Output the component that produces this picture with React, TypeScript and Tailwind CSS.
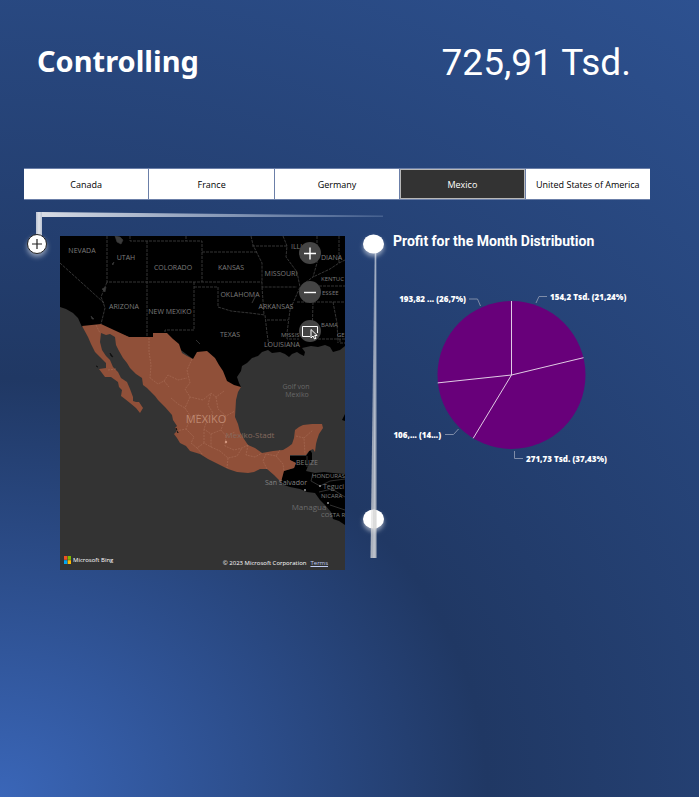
import { useState } from "react";

const COUNTRIES = ["Canada", "France", "Germany", "Mexico", "United States of America"];

const MEXICO =
  "M82 326L101 324L129 337H153V333H167L173 339L179 344L182 353L187 356L193 359L197 352L207 351L215 358L219 365L223 371L227 381L234 385L241 387L238 392L236 400L235 417L238 424L240 432L244 439L248 445L255 448L262 453L273 451L283 450L288 447L292 444L294 438L295 430L299 427L303 425L312 424L322 424L323 428L319 434L317 440L316 444L315 452L313 449L309 451L306 455H290V460L296 463L294 468L284 471L281 482L274 475L267 469H260L254 472L248 473L237 472L228 469L220 465L208 459L200 454L190 451L186 446L180 443L177 438L174 434L177 431L175 428L177 426L173 420L172 415L165 407L158 400L155 396L150 391L147 388L143 385L142 378L136 374L130 368L127 363L123 358L119 351L116 345L115 337L110 334L106 335L101 333L100 342L102 350L106 356L110 360L113 367L118 372L121 378L127 382L130 389L133 397V401L136 402L139 402L143 408L140 413L136 408L130 403L125 399L121 396L122 390L119 387L118 382L111 377L105 377L99 369L106 368V363L100 357L95 352L91 344L88 337Z";

const NORTH_AMERICA =
  "M60 236H345V346L340 350L333 352L330 347L325 345L318 347L311 346L302 348L305 352L304 356L300 354L297 352L292 354L289 357L285 354L280 352L272 353L268 350L262 352L258 356L252 358L247 363L242 366L241 371L237 377L239 383L241 387L234 390L225 381L193 359L167 340L129 337L101 326L82 327L78 318L73 313L66 309L60 307Z";

const CENTRAL_AMERICA =
  "M290 456H306L310 450L312 453V460L308 466L306 471L315 473L324 472L333 473L345 474V525L339 521L333 519L331 512L325 505L320 500L315 493L307 492L300 489L290 487L281 484L283 471L294 468L296 463L290 460Z";

const BORDERS =
  "M107 236V282H262M147 241V337M130 236V241H202V282M202 252H257M194 282V330H165V333M194 287H218V307L231 311L240 312L250 313L265 315L267 333L269 347M60 263L103 302L105 308L101 324M107 282L101 297L104 304M251 236L253 245L257 253L262 263V287H297M252 246H287M283 236L287 246L286 257L297 272L300 287L290 310L287 333V339H299M262 287L264 315M267 320H288M313 302L312 340M297 302H345M303 286H345M317 236V263L313 277L305 283M339 236V263L330 269L313 277M339 263L345 260M333 302L337 323L338 343M310 339H345M340 339V343H345M186 236V241";

const MEXICO_STATES =
  "M149 338V352L151 365L150 378L158 384L164 381L169 387M192 359L187 370L190 383L185 389L190 397L203 400L211 393L216 397L224 391M164 381L168 375L178 380L187 378M96 325L100 333M108 370L116 369M190 397L185 408L191 417L198 414L207 420L213 413L208 405L211 393M216 397L218 409L226 416L235 411M207 420L204 429L211 434L221 430L226 416M191 417L186 429L176 431M186 429L194 437L191 443L197 448L204 443L211 447L211 434M204 443L204 429M221 430L226 436L235 432M226 436L225 446L234 450L242 448L248 445M211 447L220 451L228 458L237 456L242 448M197 448L203 455M228 458L227 468M248 445L246 455L255 457L262 453M267 469L263 461L266 454L276 456L280 450M276 456L283 464L284 471M296 436L304 438L305 454M304 438L313 430M171 398L178 404L185 408";

const LAKES =
  "M115 236L120 237L123 240L121 244L117 242ZM112 264L114 262L113 265ZM91 316L94 319L92 319ZM102 289L106 287L105 292ZM252 303L255 297L253 301ZM196 340L200 344Z";

type Place = { x: number; y: number; text: string; size?: string; tone?: string; anchor?: "start" | "middle" };

const PLACES: Place[] = [
  { x: 82, y: 253, text: "NEVADA" },
  { x: 126, y: 260, text: "UTAH" },
  { x: 173, y: 270, text: "COLORADO" },
  { x: 231, y: 270, text: "KANSAS" },
  { x: 281, y: 276, text: "MISSOURI" },
  { x: 291, y: 249, text: "ILLI", anchor: "start" },
  { x: 321, y: 260, text: "DIANA", anchor: "start" },
  { x: 321, y: 281, text: "KENTUC", size: "text-[6px]", anchor: "start" },
  { x: 322, y: 295, text: "ESSEE", size: "text-[6px]", anchor: "start" },
  { x: 240, y: 297, text: "OKLAHOMA" },
  { x: 276, y: 309, text: "ARKANSAS" },
  { x: 124, y: 309, text: "ARIZONA" },
  { x: 170, y: 314, text: "NEW MEXIKO" },
  { x: 230, y: 337, text: "TEXAS" },
  { x: 281, y: 337, text: "MISSIS", size: "text-[6px]", anchor: "start" },
  { x: 321, y: 327, text: "BAMA", size: "text-[6px]", anchor: "start" },
  { x: 337, y: 337, text: "GE", size: "text-[6px]", anchor: "start" },
  { x: 282, y: 347, text: "LOUISIANA" },
  { x: 307, y: 465, text: "BELIZE" },
  { x: 312, y: 478, text: "HONDURAS", size: "text-[6px]", anchor: "start" },
  { x: 321, y: 498, text: "NICARA", size: "text-[6px]", anchor: "start" },
  { x: 321, y: 517, text: "COSTA R", size: "text-[6px]", anchor: "start" },
  { x: 296, y: 389, text: "Golf von", tone: "fill-[#686868]" },
  { x: 297, y: 397, text: "Mexiko", tone: "fill-[#686868]" },
  { x: 286, y: 485, text: "San Salvador", tone: "fill-[#838383]" },
  { x: 309, y: 510, text: "Managua", size: "text-[8px]", tone: "fill-[#6c6c6c]" },
  { x: 323, y: 489, text: "Teguci", tone: "fill-[#777777]", anchor: "start" },
  { x: 250, y: 438, text: "Mexiko-Stadt", size: "text-[8px]", tone: "fill-[#85695e]" },
  { x: 206, y: 423, text: "MEXIKO", size: "text-[11px]", tone: "fill-[#be8871]" },
];

function MapPanel() {
  return (
    <section aria-label="Map" className="relative h-[334px] overflow-hidden bg-[#333333]">
      <svg viewBox="60 236 285 334" preserveAspectRatio="xMidYMid slice" className="h-full w-full">
        <path d={NORTH_AMERICA} fill="#000" />
        <path d={CENTRAL_AMERICA} fill="#000" />
        <path d="M345 414L342 420L345 421Z" fill="#000" />
        <path d={BORDERS} fill="none" stroke="#434343" strokeWidth="0.8" strokeDasharray="3 1" />
        <path d={LAKES} fill="#3b3b3b" stroke="#3b3b3b" strokeWidth="0.6" />
        <path d={MEXICO} fill="#905039" />
        <path d="M110 353L113 357L111 356ZM96 366L98 367ZM176 428L178 433Z" stroke="#111" strokeWidth="0.8" />
        <path d={MEXICO_STATES} fill="none" stroke="#a66a53" strokeWidth="0.7" strokeDasharray="2 1" />
        <path d="M313 473L311 481L320 486L330 481L345 479M307 456V467M319 492L332 489L345 497M330 505L345 510" fill="none" stroke="#3b3b3b" strokeWidth="0.8" />
        <g fill="#999">
          <circle cx="305" cy="490" r="1" />
          <circle cx="320" cy="486" r="1" />
          <circle cx="328" cy="503" r="1" />
          <circle cx="226" cy="442" r="1.2" fill="#d3977f" />
        </g>
        {PLACES.map((p) => (
          <text
            key={p.text}
            x={p.x}
            y={p.y}
            textAnchor={p.anchor ?? "middle"}
            className={`${p.size ?? "text-[7px]"} ${p.tone ?? "fill-[#7c7c7c]"}`}
          >
            {p.text}
          </text>
        ))}
      </svg>

      <div className="absolute top-[6px] right-6 flex flex-col gap-[17px]">
        <button aria-label="Zoom in" className="size-[22px] rounded-full bg-[#444444]">
          <svg viewBox="0 0 22 22" fill="none" stroke="#fff" strokeWidth="1.4">
            <path d="M5 11.5H17M11 5.5V17.5" />
          </svg>
        </button>
        <button aria-label="Zoom out" className="size-[22px] rounded-full bg-[#444444]">
          <svg viewBox="0 0 22 22" fill="none" stroke="#fff" strokeWidth="1.4">
            <path d="M5 11.5H17" />
          </svg>
        </button>
        <button aria-label="Select area" className="size-[22px] rounded-full bg-[#444444]">
          <svg viewBox="0 0 22 22" fill="none" stroke="#fff" strokeWidth="1">
            <path d="M11 16.5H3.500V6.500H18.500V13" />
            <path d="M12 9.500V18L14 16L15.500 19L17 18.300L15.700 15.500H18.200Z" fill="#444" />
          </svg>
        </button>
      </div>

      <footer className="absolute inset-x-0 bottom-0 flex h-[20px] items-center pr-[17px] pl-1 text-[6px] text-white">
        <svg viewBox="0 0 7 8" className="mr-[2px] h-2 w-[7px]">
          <path d="M0 0H3.300V3.800H0Z" fill="#f25022" />
          <path d="M3.700 0H7V3.800H3.700Z" fill="#7fba00" />
          <path d="M0 4.200H3.300V8H0Z" fill="#00a4ef" />
          <path d="M3.700 4.200H7V8H3.700Z" fill="#ffb900" />
        </svg>
        <span>Microsoft Bing</span>
        <span className="mt-[6px] ml-auto">© 2023 Microsoft Corporation</span>
        <a href="#terms" className="mt-[6px] ml-1 text-[#bfcdf5] underline">
          Terms
        </a>
      </footer>
    </section>
  );
}

function PieChart() {
  return (
    <section aria-labelledby="pie-title" className="-mt-[3px] min-w-0">
      <h2 id="pie-title" className="font-[Roboto,sans-serif] text-[14px] leading-4 font-bold whitespace-nowrap">
        Profit for the Month Distribution
      </h2>
      <svg viewBox="393 249 257 240" className="w-full overflow-visible">
        <circle cx="511.500" cy="375" r="74" fill="#68007a" />
        <path
          d="M511.500 375V301M511.500 375L583.500 357.700M511.500 375L473.200 438.300M511.500 375L437.700 382.900"
          stroke="#e0cbe4"
          strokeWidth="1"
        />
        <path
          d="M536 303L539 296.500H547M480.500 306L477.500 299H469M458.500 429L453.500 434.500H445M514.500 451V458.500H523"
          fill="none"
          stroke="#7f8ca8"
          strokeWidth="1"
        />
        <g className="fill-white text-[8px] font-extrabold">
          <text x="550" y="300">154,2 Tsd. (21,24%)</text>
          <text x="466" y="302" textAnchor="end">193,82 ... (26,7%)</text>
          <text x="441" y="438" textAnchor="end">106,... (14...)</text>
          <text x="526" y="462">271,73 Tsd. (37,43%)</text>
        </g>
      </svg>
    </section>
  );
}

function Timeline() {
  return (
    <svg viewBox="349 230 48 334" className="h-[334px] w-12 overflow-visible" aria-hidden="true">
      <defs>
        <linearGradient id="rail" x1="0" y1="0" x2="0" y2="1">
          <stop offset="0" stopColor="#fff" stopOpacity="0.35" />
          <stop offset="1" stopColor="#dcdcdc" stopOpacity="0.75" />
        </linearGradient>
        <filter id="glow" x="-50%" y="-50%" width="200%" height="200%">
          <feDropShadow dx="0" dy="3" stdDeviation="2" floodColor="#fff" floodOpacity="0.5" />
        </filter>
      </defs>
      <g fill="#fff" filter="url(#glow)">
        <ellipse cx="377.500" cy="238" rx="10.500" ry="9.500" />
        <ellipse cx="377.500" cy="513" rx="10.500" ry="9.500" />
      </g>
      <path d="M378.500 247H380.500L380.500 552H374.500Z" fill="url(#rail)" />
      <path d="M379.500 247L378 552" stroke="#fff" strokeOpacity="0.35" />
      <path d="M377 504H380.500V523H377Z" fill="#d0d0d0" fillOpacity="0.6" />
    </svg>
  );
}

export default function App() {
  const [selected, setSelected] = useState("Mexico");
  return (
    <main className="min-h-screen bg-[radial-gradient(ellipse_166%_125%_at_0%_100%,#3a66b8_0%,#203864_42%,#2d5190_100%)] font-['Open_Sans','Noto_Sans',sans-serif] text-white">
      <header className="flex h-[168px] items-start justify-between pt-[38px] pr-[68px] pl-[37px]">
        <h1 className="font-['Noto_Sans',sans-serif] text-[29px] leading-[46px] font-bold">Controlling</h1>
        <p className="font-[Roboto,sans-serif] text-[37px] leading-[50px]">725,91 Tsd.</p>
      </header>

      <nav aria-label="Country" className="mr-[49px] ml-6 grid h-8 grid-cols-5 gap-px border-y border-[#6b7fa8] bg-[#6b7fa8]">
        {COUNTRIES.map((country) => (
          <button
            key={country}
            aria-pressed={country === selected}
            onClick={() => setSelected(country)}
            className="bg-white pt-[2px] text-[9px] whitespace-nowrap text-black aria-pressed:border aria-pressed:border-[#b8b8b8] aria-pressed:bg-[#333333] aria-pressed:text-white"
          >
            {country}
          </button>
        ))}
      </nav>

      <div className="mr-[49px] ml-6 grid grid-cols-[36px_285fr_48px_257fr]">
        <div className="col-span-3 flex h-9 items-start pt-3 pr-[10px] pl-3" aria-hidden="true">
          <div className="h-6 w-[6px] bg-linear-to-r from-[#b9c2d2] via-[#dfe2e8] to-[#b9c2d2]" />
          <div className="h-[5px] flex-1 bg-linear-to-r from-[#d8dce4] to-[#45608f] [clip-path:polygon(0_0,100%_70%,100%_100%,0_100%)]" />
        </div>
        <div />
        <div>
          <button
            aria-label="Expand"
            className="-mt-[2px] ml-[3px] block size-5 rounded-full border border-[#222] bg-white shadow-[0_3px_5px_rgba(255,255,255,0.5)]"
          >
            <svg viewBox="0 0 18 18" fill="none" stroke="#222" strokeWidth="1.200">
              <path d="M4 9H14M9 4V14" />
            </svg>
          </button>
        </div>
        <MapPanel />
        <Timeline />
        <PieChart />
      </div>
    </main>
  );
}
